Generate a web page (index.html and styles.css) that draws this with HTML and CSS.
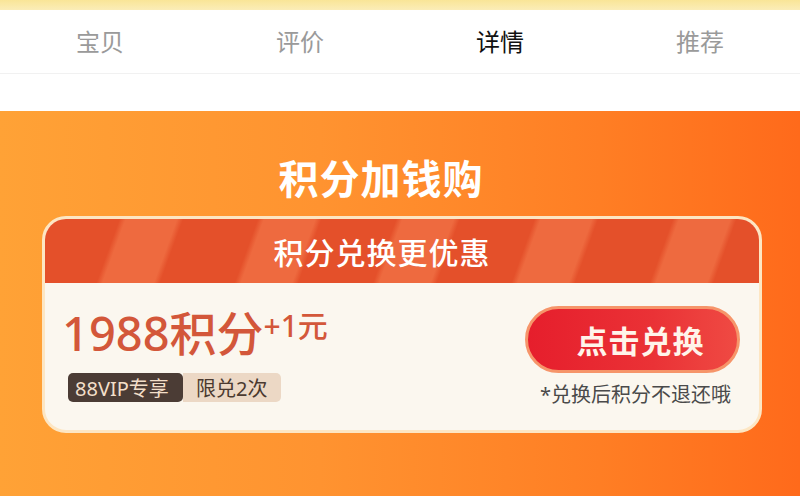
FILE: index.html
```html
<!DOCTYPE html>
<html lang="zh-CN">
<head>
<meta charset="utf-8">
<title>积分加钱购</title>
<link rel="stylesheet" href="styles.css">
</head>
<body>
<div class="topbar"></div>
<nav class="tabs">
  <div class="tab">宝贝</div>
  <div class="tab">评价</div>
  <div class="tab active">详情</div>
  <div class="tab">推荐</div>
</nav>
<div class="spacer"></div>
<section class="promo">
  <h1 class="title">积分加钱购</h1>
  <div class="card">
    <div class="card-head">积分兑换更优惠</div>
    <div class="card-body">
      <div class="left">
        <div class="price"><span class="pts">1988积分</span><span class="plus">+1元</span></div>
        <div class="tags">
          <span class="tag dark">88VIP专享</span><span class="tag light">限兑2次</span>
        </div>
      </div>
      <div class="right">
        <div class="btn">点击兑换</div>
        <div class="note">*兑换后积分不退还哦</div>
      </div>
    </div>
  </div>
</section>
</body>
</html>
```
FILE: styles.css
```css
html, body {
  margin: 0;
  padding: 0;
}
body {
  width: 800px;
  height: 496px;
  overflow: hidden;
  font-family: "Noto Sans", "Noto Sans CJK SC", sans-serif;
  background: #ffffff;
}
.topbar {
  height: 10px;
  background: linear-gradient(180deg, #f9e597 0%, #fbedb8 100%);
}
.tabs {
  display: flex;
  height: 63px;
  border-bottom: 1px solid #f1f1f1;
  background: #fff;
}
.tab {
  flex: 1;
  display: flex;
  align-items: center;
  justify-content: center;
  font-size: 24px;
  color: #9a9a9a;
  padding-bottom: 2px;
}
.tab.active {
  color: #111;
}
.spacer {
  height: 37px;
  background: #fff;
}
.promo {
  height: 385px;
  background: linear-gradient(90deg, #ffa236 0%, #ff9330 40%, #ff7e24 75%, #ff6a1b 100%);
  padding-top: 1px;
}
.title {
  margin: 40px 0 0 0;
  padding-right: 38px;
  text-align: center;
  color: #fff;
  font-size: 40px;
  font-weight: 700;
  line-height: 54px;
  letter-spacing: 1px;
}
.card {
  margin: 10px 38px 0 42px;
  border: 3px solid #fde6c3;
  border-radius: 24px;
  overflow: hidden;
  background: #fbf7ef;
}
.card-head {
  height: 64px;
  display: flex;
  align-items: center;
  justify-content: center;
  padding-right: 40px;
  color: #fff;
  font-size: 30px;
  font-weight: 500;
  letter-spacing: 1px;
  background:
    repeating-linear-gradient(110deg,
      #e4502a 0px, #e4502a 70px,
      #ee6a3f 76px, #ee6a3f 124px,
      #e4502a 130px);
}
.card-body {
  display: flex;
  justify-content: space-between;
  padding: 23px 19px 0 17px;
  height: 124px;
}
.left {
  display: flex;
  flex-direction: column;
}
.price {
  display: flex;
  align-items: flex-start;
  color: #d3573a;
  line-height: 1;
  margin-top: 4px;
}
.pts {
  font-size: 47px;
  font-weight: 500;
}
.plus {
  font-size: 30px;
  font-weight: 500;
  margin-top: 1px;
}
.tags {
  display: flex;
  margin-top: 16px;
  margin-left: 6px;
}
.tag {
  height: 29px;
  display: flex;
  align-items: center;
  font-size: 20px;
  padding: 0 7px;
}
.tag.dark {
  background: #4b3c35;
  color: #f3dfc9;
  border-radius: 5px;
  width: 101px;
}
.tag.light {
  background: #ecd8c5;
  color: #4b3a30;
  border-radius: 0 5px 5px 0;
  width: 78px;
  padding-left: 13px;
}
.right {
  display: flex;
  flex-direction: column;
  align-items: center;
}
.btn {
  width: 193px;
  height: 61px;
  border: 3px solid #f6956a;
  border-radius: 34px;
  background: linear-gradient(90deg, #e61e2c 0%, #ea3236 60%, #ef4a43 100%);
  color: #fff4ea;
  font-size: 31px;
  font-weight: 700;
  display: flex;
  align-items: center;
  justify-content: center;
  padding-left: 16px;
  box-sizing: content-box;
  letter-spacing: 1px;
}
.note {
  margin-top: 10px;
  font-size: 20px;
  color: #4a4a4a;
  line-height: 24px;
  padding-left: 6px;
}
```
